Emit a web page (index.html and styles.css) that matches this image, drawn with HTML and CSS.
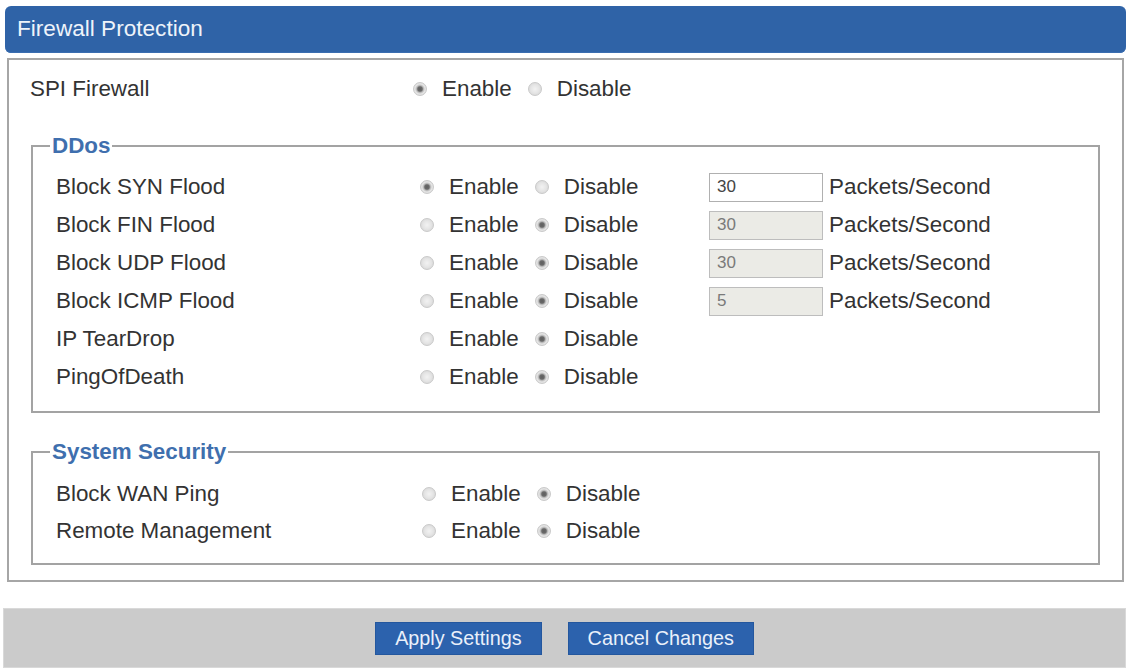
FILE: index.html
```html
<!DOCTYPE html>
<html>
<head>
<meta charset="utf-8">
<title>Firewall Protection</title>
<link rel="stylesheet" href="styles.css">
</head>
<body>
<div class="header">Firewall Protection</div>
<div class="panel">
  <div class="row row-top">
    <span class="label label-top">SPI Firewall</span>
    <span class="radios">
      <input type="radio" name="spi" checked><span class="opt">Enable</span>
      <input type="radio" name="spi" class="second"><span class="opt">Disable</span>
    </span>
  </div>

  <fieldset class="group ddos">
    <legend>DDos</legend>
    <div class="row">
      <span class="label">Block SYN Flood</span>
      <span class="radios wide">
        <input type="radio" name="syn" checked><span class="opt">Enable</span>
        <input type="radio" name="syn" class="second"><span class="opt">Disable</span>
      </span>
      <input type="text" class="num" value="30"><span class="unit">Packets/Second</span>
    </div>
    <div class="row">
      <span class="label">Block FIN Flood</span>
      <span class="radios wide">
        <input type="radio" name="fin"><span class="opt">Enable</span>
        <input type="radio" name="fin" class="second" checked><span class="opt">Disable</span>
      </span>
      <input type="text" class="num" value="30" disabled><span class="unit">Packets/Second</span>
    </div>
    <div class="row">
      <span class="label">Block UDP Flood</span>
      <span class="radios wide">
        <input type="radio" name="udp"><span class="opt">Enable</span>
        <input type="radio" name="udp" class="second" checked><span class="opt">Disable</span>
      </span>
      <input type="text" class="num" value="30" disabled><span class="unit">Packets/Second</span>
    </div>
    <div class="row">
      <span class="label">Block ICMP Flood</span>
      <span class="radios wide">
        <input type="radio" name="icmp"><span class="opt">Enable</span>
        <input type="radio" name="icmp" class="second" checked><span class="opt">Disable</span>
      </span>
      <input type="text" class="num" value="5" disabled><span class="unit">Packets/Second</span>
    </div>
    <div class="row">
      <span class="label">IP TearDrop</span>
      <span class="radios wide">
        <input type="radio" name="tear"><span class="opt">Enable</span>
        <input type="radio" name="tear" class="second" checked><span class="opt">Disable</span>
      </span>
    </div>
    <div class="row">
      <span class="label">PingOfDeath</span>
      <span class="radios wide">
        <input type="radio" name="pod"><span class="opt">Enable</span>
        <input type="radio" name="pod" class="second" checked><span class="opt">Disable</span>
      </span>
    </div>
  </fieldset>

  <fieldset class="group sys">
    <legend>System Security</legend>
    <div class="row row-sys">
      <span class="label label-sys">Block WAN Ping</span>
      <span class="radios">
        <input type="radio" name="wan"><span class="opt">Enable</span>
        <input type="radio" name="wan" class="second" checked><span class="opt">Disable</span>
      </span>
    </div>
    <div class="row row-sys">
      <span class="label label-sys">Remote Management</span>
      <span class="radios">
        <input type="radio" name="rm"><span class="opt">Enable</span>
        <input type="radio" name="rm" class="second" checked><span class="opt">Disable</span>
      </span>
    </div>
  </fieldset>
</div>

<div class="actions">
  <button class="btn">Apply Settings</button>
  <button class="btn">Cancel Changes</button>
</div>
</body>
</html>
```

FILE: styles.css
```css
html, body {
  margin: 0;
  padding: 0;
  background: #ffffff;
}

body {
  font-family: "Liberation Sans", Arial, sans-serif;
  font-size: 22.4px;
  color: #333333;
}

.header {
  margin: 6px 2px 0 5px;
  height: 47px;
  line-height: 45px;
  padding-left: 12px;
  background: #2f63a7;
  border-radius: 6px;
  color: #eef3fa;
  font-size: 22.6px;
  box-shadow: inset 0 -1px 0 #3a6db0;
}

.panel {
  margin: 5px 4px 0 7px;
  border: 2px solid #a6a6a6;
  padding: 10px 19px 15px 19px;
}

.row {
  display: flex;
  align-items: center;
  height: 38px;
}

.row-sys {
  height: 37px;
}

.row-top {
  padding-left: 2px;
}

.label {
  width: 364px;
  flex: none;
  white-space: nowrap;
}

.label-top {
  width: 383px;
}

.label-sys {
  width: 366px;
}

.radios {
  display: flex;
  align-items: center;
  flex: none;
}

.radios.wide {
  width: 289px;
}

.opt {
  white-space: nowrap;
}

input[type="radio"] {
  -webkit-appearance: none;
  appearance: none;
  width: 14px;
  height: 14px;
  margin: 0 15px 0 0;
  border-radius: 50%;
  border: 1px solid #c9c9c9;
  background: radial-gradient(circle at 50% 50%, #f2f2f2 0, #e6e6e6 45%, #d2d2d2 100%);
  box-sizing: border-box;
  flex: none;
}

input[type="radio"]:checked {
  background: radial-gradient(circle at 50% 50%, #5e5e5e 0, #6a6a6a 2.2px, #bdbdbd 3.6px, #e6e6e6 5px, #d0d0d0 100%);
}

input[type="radio"].second {
  margin-left: 16px;
}

.group {
  border: 2px solid #a3a3a3;
  margin: 0 0 0 3px;
  padding: 0 0 0 23px;
  width: 1069px;
  box-sizing: border-box;
}

.group legend {
  margin-left: -6px;
  padding: 0 2px;
  font-weight: bold;
  color: #3f6fae;
  font-size: 22.4px;
  line-height: 26px;
  height: 26px;
}

.ddos {
  margin-top: 25px;
  padding-top: 9px;
  padding-bottom: 15px;
}

.sys {
  margin-top: 26px;
  padding-top: 10px;
  padding-bottom: 14px;
}

.num {
  width: 114px;
  height: 29px;
  box-sizing: border-box;
  margin: 0 6px 0 0;
  padding: 0 7px;
  border: 1px solid #b0b0b0;
  background: #ffffff;
  font-family: "Liberation Sans", Arial, sans-serif;
  font-size: 17px;
  color: #444444;
  flex: none;
}

.num:disabled {
  background: #ebebe6;
  border-color: #bdbdbd;
  color: #7a7a7a;
}

.unit {
  white-space: nowrap;
}

.actions {
  margin: 26px 2px 0 3px;
  height: 60px;
  box-sizing: border-box;
  background: #cbcbcb;
  border: 1px solid #d9d9d9;
  display: flex;
  align-items: center;
  justify-content: center;
  gap: 26px;
}

.btn {
  height: 33px;
  padding: 0 19px;
  background: #2c62ad;
  border: 1px solid #24579e;
  color: #eaf0fa;
  font-family: "Liberation Sans", Arial, sans-serif;
  font-size: 19.8px;
  margin: 0;
  border-radius: 0;
}
```
